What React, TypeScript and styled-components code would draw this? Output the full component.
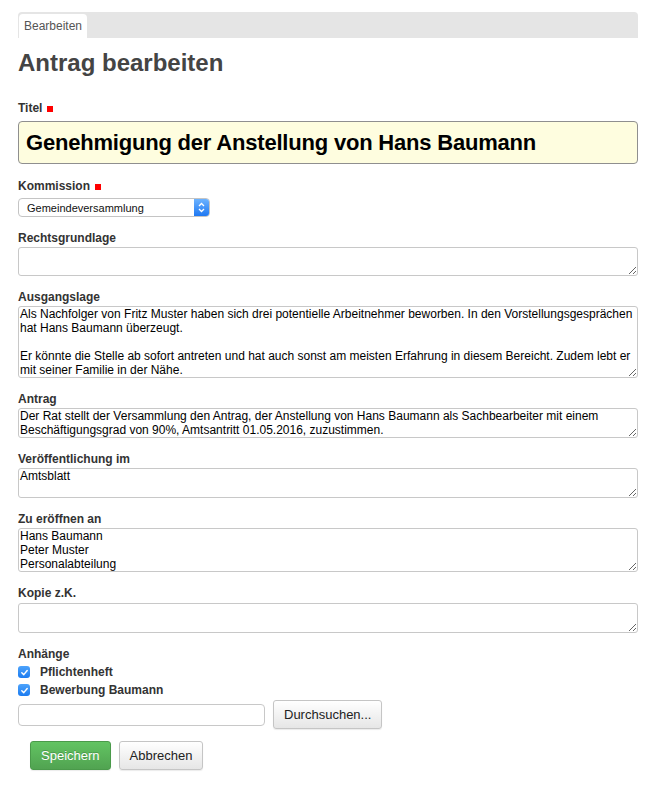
import React from 'react'
import styled, { createGlobalStyle } from 'styled-components'

const GlobalStyle = createGlobalStyle`
  html, body {
    margin: 0;
    padding: 0;
    background: #fff;
  }
  body {
    font-family: "Liberation Sans", Arial, Helvetica, sans-serif;
    color: #333;
  }
`

const Page = styled.div`
    padding: 12px 31px 20px 18px;
`

const TabBar = styled.div`
    display: flex;
    height: 26px;
    padding: 2px 0 0 1px;
    box-sizing: border-box;
    background: #e5e5e5;
    border-radius: 4px 4px 0 0;
`

const Tab = styled.div`
    display: flex;
    align-items: center;
    padding: 0 5px;
    width: 68px;
    box-sizing: border-box;
    background: #fff;
    border-radius: 4px 4px 0 0;
    font-size: 12px;
    color: #555;
`

const Heading = styled.h1`
    margin: 10px 0 22px;
    font-size: 24px;
    line-height: 30px;
    font-weight: bold;
    color: #444;
`

const Field = styled.div<{ $gap?: number, $bottom?: number }>`
    display: flex;
    flex-direction: column;
    margin-bottom: ${props => props.$bottom ?? 13}px;

    & > label {
        margin-bottom: ${props => props.$gap ?? 2}px;
    }
`

const Label = styled.label`
    display: flex;
    align-items: center;
    gap: 5px;
    font-size: 12px;
    line-height: 16px;
    font-weight: bold;
    color: #333;
`

const Required = styled.span`
    display: inline-block;
    width: 6px;
    height: 6px;
    background: #f00;
    margin-top: 2px;
`

const TitleInput = styled.input`
    box-sizing: border-box;
    width: 100%;
    height: 43px;
    padding: 0 7px;
    border: 1px solid #8f8f8f;
    border-radius: 4px;
    background: #fefddf;
    font-family: "Liberation Sans", Arial, sans-serif;
    font-size: 22px;
    font-weight: bold;
    letter-spacing: -0.2px;
    color: #000;
    outline: none;
`

const SelectBox = styled.div`
    display: flex;
    align-items: stretch;
    width: 192px;
    height: 19px;
    box-sizing: border-box;
    border: 1px solid #c4c4c4;
    border-radius: 4px;
    overflow: hidden;
    background: #fff;
`

const SelectText = styled.span`
    flex: 1;
    display: flex;
    align-items: center;
    padding-left: 8px;
    font-size: 11px;
    color: #111;
`

const SelectArrow = styled.span`
    width: 15px;
    display: flex;
    align-items: center;
    justify-content: center;
    background: linear-gradient(#6cb3ff, #1f78f2);
`

const TextArea = styled.textarea<{ $height: number }>`
    box-sizing: border-box;
    width: 100%;
    height: ${props => props.$height}px;
    margin: 0;
    padding: 0 1px;
    border: 1px solid #c8c8c8;
    border-radius: 3px;
    font-family: "Liberation Sans", Arial, sans-serif;
    font-size: 12px;
    line-height: 14px;
    color: #000;
    resize: vertical;
    outline: none;
`

const CheckRow = styled.div`
    display: flex;
    align-items: center;
    gap: 10px;
    height: 18px;
`

const CheckBox = styled.span`
    width: 12px;
    height: 12px;
    border-radius: 3px;
    background: linear-gradient(#4da3fb, #1b7bf0);
    display: flex;
    align-items: center;
    justify-content: center;
`

const CheckLabel = styled.span`
    font-size: 12px;
    font-weight: bold;
    color: #333;
`

const Anhaenge = styled.div`
    margin-bottom: 1px;
`

const FileRow = styled.div`
    display: flex;
    align-items: center;
    gap: 8px;
    height: 29px;
    margin-top: 1px;
`

const FileInput = styled.input`
    box-sizing: border-box;
    width: 247px;
    height: 22px;
    border: 1px solid #c8c8c8;
    border-radius: 4px;
    outline: none;
`

const Button = styled.button<{ $primary?: boolean }>`
    box-sizing: border-box;
    height: 29px;
    padding: 0 10px;
    border-radius: 3px;
    font-family: "Liberation Sans", Arial, sans-serif;
    font-size: 13px;
    cursor: pointer;
    border: 1px solid ${props => props.$primary ? '#4a9a4a' : '#c5c5c5'};
    color: ${props => props.$primary ? '#fff' : '#222'};
    background: ${props => props.$primary
        ? 'linear-gradient(#62c462, #51a351)'
        : 'linear-gradient(#ffffff, #e6e6e6)'};
    text-shadow: ${props => props.$primary ? '0 -1px 0 rgba(0,0,0,0.2)' : 'none'};
    box-shadow: 0 1px 1px rgba(0,0,0,0.08);
`

const Actions = styled.div`
    display: flex;
    gap: 8px;
    margin-top: 12px;
    padding-left: 12px;
`

const Check = () => (
    <CheckBox>
        <svg width="9" height="9" viewBox="0 0 10 10">
            <path d="M2 5.2 L4.2 7.4 L8 2.8" fill="none" stroke="#fff" strokeWidth="1.6" strokeLinecap="round" strokeLinejoin="round" />
        </svg>
    </CheckBox>
)

const ausgangslage = 'Als Nachfolger von Fritz Muster haben sich drei potentielle Arbeitnehmer beworben. In den Vorstellungsgesprächen hat Hans Baumann überzeugt.\n\nEr könnte die Stelle ab sofort antreten und hat auch sonst am meisten Erfahrung in diesem Bereicht. Zudem lebt er mit seiner Familie in der Nähe.'
const antrag = 'Der Rat stellt der Versammlung den Antrag, der Anstellung von Hans Baumann als Sachbearbeiter mit einem Beschäftigungsgrad von 90%, Amtsantritt 01.05.2016, zuzustimmen.'

function App() {
    return (
        <Page>
            <GlobalStyle />
            <TabBar>
                <Tab>Bearbeiten</Tab>
            </TabBar>

            <Heading>Antrag bearbeiten</Heading>

            {/* Titel */}
            <Field $gap={5} $bottom={14}>
                <Label>Titel <Required /></Label>
                <TitleInput defaultValue="Genehmigung der Anstellung von Hans Baumann" />
            </Field>

            {/* Kommission */}
            <Field $gap={4}>
                <Label>Kommission <Required /></Label>
                <SelectBox>
                    <SelectText>Gemeindeversammlung</SelectText>
                    <SelectArrow>
                        <svg width="7" height="11" viewBox="0 0 7 11">
                            <path d="M1 4 L3.5 1.5 L6 4 M1 7 L3.5 9.5 L6 7" fill="none" stroke="#fff" strokeWidth="1.3" />
                        </svg>
                    </SelectArrow>
                </SelectBox>
            </Field>

            <Field $gap={1}>
                <Label>Rechtsgrundlage</Label>
                <TextArea $height={29} defaultValue="" />
            </Field>

            <Field $gap={1}>
                <Label>Ausgangslage</Label>
                <TextArea $height={72} defaultValue={ausgangslage} />
            </Field>

            <Field $gap={1}>
                <Label>Antrag</Label>
                <TextArea $height={30} defaultValue={antrag} />
            </Field>

            <Field $gap={1}>
                <Label>Veröffentlichung im</Label>
                <TextArea $height={30} defaultValue="Amtsblatt" />
            </Field>

            <Field $gap={1}>
                <Label>Zu eröffnen an</Label>
                <TextArea $height={44} defaultValue={'Hans Baumann\nPeter Muster\nPersonalabteilung'} />
            </Field>

            <Field $gap={2}>
                <Label>Kopie z.K.</Label>
                <TextArea $height={30} defaultValue="" />
            </Field>

            {/* Anhänge */}
            <Anhaenge>
                <Label>Anhänge</Label>
            </Anhaenge>
            <CheckRow>
                <Check />
                <CheckLabel>Pflichtenheft</CheckLabel>
            </CheckRow>
            <CheckRow>
                <Check />
                <CheckLabel>Bewerbung Baumann</CheckLabel>
            </CheckRow>
            <FileRow>
                <FileInput type="text" />
                <Button>Durchsuchen...</Button>
            </FileRow>

            <Actions>
                <Button $primary>Speichern</Button>
                <Button>Abbrechen</Button>
            </Actions>
        </Page>
    )
}

export default App
